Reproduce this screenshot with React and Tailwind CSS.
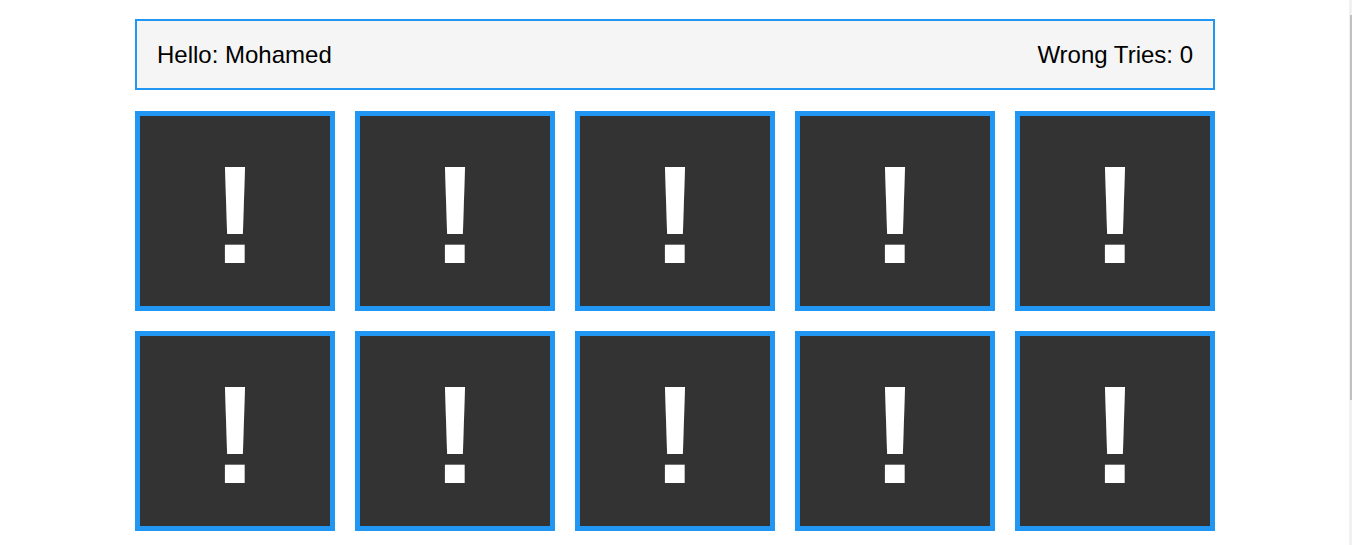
import { useState } from 'react'

const CARD_COUNT = 10

function Card() {
  return (
    <div className="w-[200px] h-[200px] border-[5px] border-[#2196f3] bg-[#333333] flex items-center justify-center">
      <span className="text-white font-bold text-[140px] leading-none pt-[8px] select-none">!</span>
    </div>
  )
}

export default function App() {
  const [name] = useState('Mohamed')
  const [wrongTries] = useState(0)

  return (
    <div className="min-h-screen bg-white pr-[2px] font-['Liberation_Sans',Arial,sans-serif]">
      <div className="w-[1080px] mx-auto pt-[19px]">
        {/* Info bar */}
        <div className="flex justify-between items-center border-2 border-[#2196f3] bg-[#f5f5f5] p-5 text-[24px] leading-[27px] text-black">
          <div>Hello: {name}</div>
          <div>Wrong Tries: {wrongTries}</div>
        </div>

        {/* Cards grid */}
        <div className="mt-[21px] grid grid-cols-5 gap-5">
          {Array.from({ length: CARD_COUNT }).map((_, i) => (
            <Card key={i} />
          ))}
        </div>
      </div>

      {/* Scrollbar strip */}
      <div className="fixed top-0 right-0 h-full w-[3px] bg-[#f1f1f1]">
        <div className="mt-[15px] ml-px h-[385px] w-[2px] bg-[#c1c1c1]" />
      </div>
    </div>
  )
}
